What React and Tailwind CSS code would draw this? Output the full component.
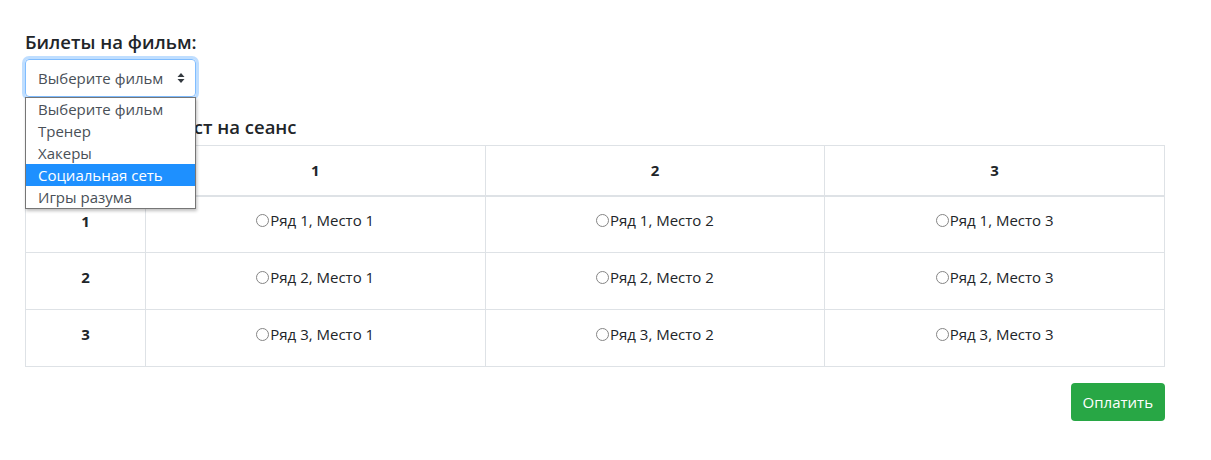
import React, { useState } from 'react';

const films = ['Выберите фильм', 'Тренер', 'Хакеры', 'Социальная сеть', 'Игры разума'];
const seats = [1, 2, 3];

function Seat({ row, col }) {
    return (
        <label className="inline-flex items-center">
            <input type="radio" name="seat" className="w-[13px] h-[13px] m-0 mr-[1px] appearance-none rounded-full border border-[#858585] bg-white" />
            Ряд {row}, Место {col}
        </label>
    );
}

export default function App() {
    const [film] = useState(3);

    return (
        <div className="min-h-[460px] bg-white text-[#212529] px-[25px] pt-[30px]" style={{ fontFamily: '"Open Sans", "Noto Sans", sans-serif' }}>
            <h5 className="text-[18.5px] font-semibold leading-[24px] mb-[5px]">Билеты на фильм:</h5>

            <div className="relative w-[171px]">
                <div className="h-[38px] flex items-center justify-between pl-[12px] pr-[10px] border border-[#80bdff] rounded-[4px] shadow-[0_0_0_3px_rgba(0,123,255,0.25)] text-[15px] text-[#495057]">
                    <span>Выберите фильм</span>
                    <svg width="8" height="12" viewBox="0 0 8 12" className="fill-[#343a40]">
                        <path d="M4 1 L7.5 5 H0.5 Z" />
                        <path d="M4 11 L7.5 7 H0.5 Z" />
                    </svg>
                </div>
                <ul className="absolute left-0 top-[38px] w-[171px] z-10 bg-white border border-[#767676] shadow-[1px_2px_3px_rgba(0,0,0,0.25)] text-[15px] leading-[22px] text-[#495057]">
                    {films.map((f, i) => (
                        <li key={f} className={`pl-[12px] ${i === film ? 'bg-[#1e90ff] text-white' : ''}`}>{f}</li>
                    ))}
                </ul>
            </div>

            <h5 className="text-[18.5px] font-semibold leading-[24px] mt-[18px] mb-[6px]">Бронирование мест на сеанс</h5>

            <table className="w-[1140px] border-collapse text-[15px] text-center">
                <thead>
                    <tr className="h-[50px]">
                        <th className="w-[120px] border border-[#dee2e6] border-b-2"></th>
                        {seats.map(c => (
                            <th key={c} className="w-[340px] border border-[#dee2e6] border-b-2 font-bold">{c}</th>
                        ))}
                    </tr>
                </thead>
                <tbody>
                    {seats.map(r => (
                        <tr key={r} className="h-[57px]">
                            <td className="border border-[#dee2e6] font-bold pb-[7px]">{r}</td>
                            {seats.map(c => (
                                <td key={c} className="border border-[#dee2e6] pb-[7px]"><Seat row={r} col={c} /></td>
                            ))}
                        </tr>
                    ))}
                </tbody>
            </table>

            <div className="w-[1140px] flex justify-end mt-[16px]">
                <button className="h-[38px] px-[12px] rounded-[4px] bg-[#28a745] text-white text-[15px]">Оплатить</button>
            </div>
        </div>
    );
}
